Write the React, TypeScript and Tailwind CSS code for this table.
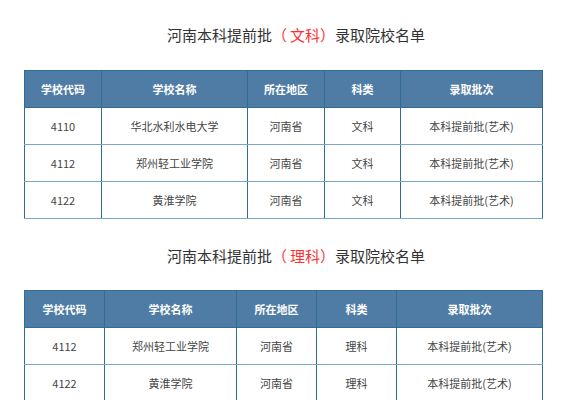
import React from "react";

type Row = [string, string, string, string, string];

const headers = ["学校代码", "学校名称", "所在地区", "科类", "录取批次"];

function Title({ kind }: { kind: string }) {
  return (
    <div className="h-5 leading-5 text-[15px] text-[#333] text-center pl-[7px] whitespace-nowrap">
      河南本科提前批
      <span className="text-[#ff3030]">（<span className="ml-[3px]">{kind}</span>）</span>
      录取院校名单
    </div>
  );
}

function DataTable({ widths, rows }: { widths: number[]; rows: Row[] }) {
  return (
    <table className="ml-[24px] border-collapse table-fixed w-[518px] text-[11px]">
      <colgroup>
        {widths.map((w, i) => (
          <col key={i} style={{ width: w }} />
        ))}
      </colgroup>
      <thead>
        <tr className="h-[37px] bg-[#4f7ca4]">
          {headers.map((h) => (
            <th
              key={h}
              className="border border-[#2f6d96] text-white font-bold text-center p-0"
            >
              {h}
            </th>
          ))}
        </tr>
      </thead>
      <tbody>
        {rows.map((r, ri) => (
          <tr key={ri} className="h-[37px]">
            {r.map((c, ci) => (
              <td
                key={ci}
                className="border-x border-x-[#2f6d96] border-b border-b-[#7da5c6] text-center text-[#444] p-0"
              >
                {c}
              </td>
            ))}
          </tr>
        ))}
      </tbody>
    </table>
  );
}

export default function App() {
  const rows1: Row[] = [
    ["4110", "华北水利水电大学", "河南省", "文科", "本科提前批(艺术)"],
    ["4112", "郑州轻工业学院", "河南省", "文科", "本科提前批(艺术)"],
    ["4122", "黄淮学院", "河南省", "文科", "本科提前批(艺术)"],
  ];
  const rows2: Row[] = [
    ["4112", "郑州轻工业学院", "河南省", "理科", "本科提前批(艺术)"],
    ["4122", "黄淮学院", "河南省", "理科", "本科提前批(艺术)"],
  ];
  return (
    <div
      className="w-[585px] h-[400px] overflow-hidden bg-white pt-[25px]"
      style={{ fontFamily: '"Noto Sans CJK SC", "Noto Sans", sans-serif' }}
    >
      <Title kind="文科" />
      <div className="mt-[25px]">
        <DataTable widths={[77, 146, 77, 76, 142]} rows={rows1} />
      </div>
      <div className="mt-[27px]">
        <Title kind="理科" />
      </div>
      <div className="mt-[24px]">
        <DataTable widths={[80, 132, 80, 80, 146]} rows={rows2} />
      </div>
    </div>
  );
}
